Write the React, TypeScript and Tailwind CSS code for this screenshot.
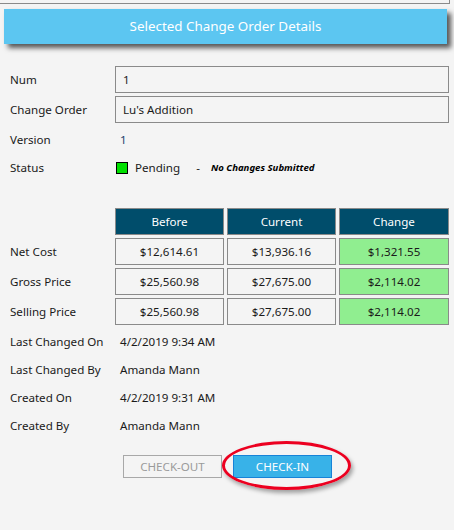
import React from "react";

const font = { fontFamily: '"Noto Sans", "Open Sans", Arial, sans-serif' };

const rows = [
  { label: "Net Cost", before: "$12,614.61", current: "$13,936.16", change: "$1,321.55" },
  { label: "Gross Price", before: "$25,560.98", current: "$27,675.00", change: "$2,114.02" },
  { label: "Selling Price", before: "$25,560.98", current: "$27,675.00", change: "$2,114.02" },
];

const info = [
  { label: "Last Changed On", value: "4/2/2019 9:34 AM" },
  { label: "Last Changed By", value: "Amanda Mann" },
  { label: "Created On", value: "4/2/2019 9:31 AM" },
  { label: "Created By", value: "Amanda Mann" },
];

export default function App() {
  return (
    <div
      className="w-[454px] h-[530px] bg-[#f4f4f4] overflow-hidden text-[11.6px] text-[#1a1a1a] relative"
      style={font}
    >
      {/* clipped panel edge above */}
      <div className="h-[4px] w-[450px] border-b border-r border-[#8a8a8a]" />

      {/* header */}
      <div className="mt-[5px] ml-[4px] w-[443px] h-[35px] bg-[#5cc6f1] flex items-center justify-center text-white text-[13.4px] shadow-[4px_4px_5px_rgba(0,0,0,0.65)]">
        Selected Change Order Details
      </div>

      <div className="mt-[22px] pl-[10px]">
        {/* text inputs */}
        <div className="flex items-center h-[27px]">
          <div className="w-[105px]">Num</div>
          <div className="w-[334px] h-[27px] border border-[#8a8a8a] flex items-center pl-[7px]">
            1
          </div>
        </div>
        <div className="flex items-center h-[27px] mt-[3px]">
          <div className="w-[105px]">Change Order</div>
          <div className="w-[334px] h-[27px] border border-[#8a8a8a] flex items-center pl-[7px]">
            Lu's Addition
          </div>
        </div>

        <div className="flex items-center h-[28px] mt-[3px]">
          <div className="w-[110px]">Version</div>
          <div className="text-[#21406b]">1</div>
        </div>
        <div className="flex items-center h-[28px]">
          <div className="w-[106px]">Status</div>
          <div className="w-[12px] h-[12px] bg-[#00e000] border border-black" />
          <div className="ml-[7px]">Pending</div>
          <div className="ml-[16px]">-</div>
          <div className="ml-[11px] text-[9.6px] font-bold italic text-black">
            No Changes Submitted
          </div>
        </div>

        {/* price table */}
        <div className="mt-[26px] grid grid-cols-[102px_109px_109px_110px] gap-[3px] items-center">
          <div />
          {["Before", "Current", "Change"].map((h) => (
            <div
              key={h}
              className="h-[27px] bg-[#004d6b] border border-[#8a8a8a] text-white flex items-center justify-center"
            >
              {h}
            </div>
          ))}
          {rows.map((r) => (
            <React.Fragment key={r.label}>
              <div>{r.label}</div>
              <div className="h-[27px] border border-[#8a8a8a] flex items-center justify-center">
                {r.before}
              </div>
              <div className="h-[27px] border border-[#8a8a8a] flex items-center justify-center">
                {r.current}
              </div>
              <div className="h-[27px] border border-[#8a8a8a] bg-[#90ee90] flex items-center justify-center">
                {r.change}
              </div>
            </React.Fragment>
          ))}
        </div>

        {/* audit info */}
        <div className="mt-[3px]">
          {info.map((i) => (
            <div key={i.label} className="flex items-center h-[28px]">
              <div className="w-[110px]">{i.label}</div>
              <div>{i.value}</div>
            </div>
          ))}
        </div>
      </div>

      {/* buttons */}
      <div className="mt-[15px] flex pl-[123px] gap-[11px]">
        <button className="w-[99px] h-[23px] border border-[#a8a8a8] text-[#9a9a9a] text-[11.6px] flex items-center justify-center">
          CHECK-OUT
        </button>
        <button className="w-[99px] h-[23px] border border-[#1683d8] bg-[#38b2e8] text-white text-[11.6px] flex items-center justify-center">
          CHECK-IN
        </button>
      </div>

      {/* red highlight ellipse */}
      <div className="absolute left-[222px] top-[441px] w-[129px] h-[49px] rounded-[50%] border-[3.5px] border-[#ec0020] shadow-[2px_3px_4px_rgba(0,0,0,0.35)] pointer-events-none" />
    </div>
  );
}
